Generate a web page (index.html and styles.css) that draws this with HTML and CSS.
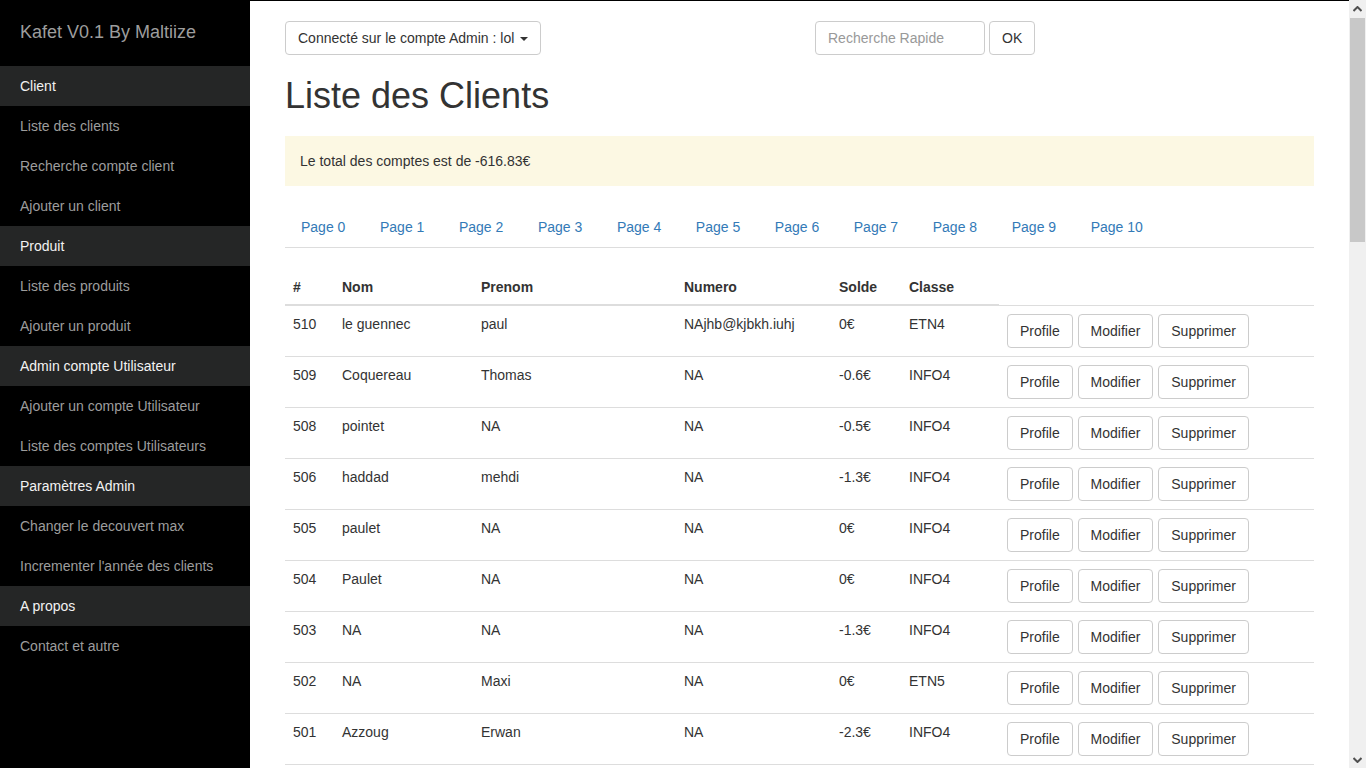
FILE: index.html
```html
<!DOCTYPE html>
<html lang="fr">
<head>
<meta charset="utf-8">
<title>Kafet - Liste des Clients</title>
<link rel="stylesheet" href="styles.css">
</head>
<body>
<div class="layout">
  <aside class="sidebar">
    <div class="brand">Kafet V0.1 By Maltiize</div>
    <div class="side-head">Client</div>
    <a class="side-link" href="#">Liste des clients</a>
    <a class="side-link" href="#">Recherche compte client</a>
    <a class="side-link" href="#">Ajouter un client</a>
    <div class="side-head">Produit</div>
    <a class="side-link" href="#">Liste des produits</a>
    <a class="side-link" href="#">Ajouter un produit</a>
    <div class="side-head">Admin compte Utilisateur</div>
    <a class="side-link" href="#">Ajouter un compte Utilisateur</a>
    <a class="side-link" href="#">Liste des comptes Utilisateurs</a>
    <div class="side-head">Paramètres Admin</div>
    <a class="side-link" href="#">Changer le decouvert max</a>
    <a class="side-link" href="#">Incrementer l'année des clients</a>
    <div class="side-head">A propos</div>
    <a class="side-link" href="#">Contact et autre</a>
  </aside>

  <main class="main">
    <div class="topbar">
      <div>
        <button class="btn" type="button">Connecté sur le compte Admin : lol <span class="caret"></span></button>
      </div>
      <form class="search">
        <input class="search-input" type="text" placeholder="Recherche Rapide">
        <button class="btn" type="button">OK</button>
      </form>
    </div>

    <h1 class="title">Liste des Clients</h1>

    <div class="alert">Le total des comptes est de -616.83€</div>

    <ul class="tabs">
      <li><a href="#">Page 0</a></li>
      <li><a href="#">Page 1</a></li>
      <li><a href="#">Page 2</a></li>
      <li><a href="#">Page 3</a></li>
      <li><a href="#">Page 4</a></li>
      <li><a href="#">Page 5</a></li>
      <li><a href="#">Page 6</a></li>
      <li><a href="#">Page 7</a></li>
      <li><a href="#">Page 8</a></li>
      <li><a href="#">Page 9</a></li>
      <li><a href="#">Page 10</a></li>
    </ul>

    <table class="table">
      <colgroup>
        <col class="c-id"><col class="c-nom"><col class="c-prenom"><col class="c-num"><col class="c-solde"><col class="c-classe"><col>
      </colgroup>
      <thead>
        <tr><th>#</th><th>Nom</th><th>Prenom</th><th>Numero</th><th>Solde</th><th>Classe</th></tr>
      </thead>
      <tbody>
        <tr><td>510</td><td>le guennec</td><td>paul</td><td>NAjhb@kjbkh.iuhj</td><td>0€</td><td>ETN4</td><td class="actions"><button class="btn">Profile</button> <button class="btn">Modifier</button> <button class="btn">Supprimer</button></td></tr>
        <tr><td>509</td><td>Coquereau</td><td>Thomas</td><td>NA</td><td>-0.6€</td><td>INFO4</td><td class="actions"><button class="btn">Profile</button> <button class="btn">Modifier</button> <button class="btn">Supprimer</button></td></tr>
        <tr><td>508</td><td>pointet</td><td>NA</td><td>NA</td><td>-0.5€</td><td>INFO4</td><td class="actions"><button class="btn">Profile</button> <button class="btn">Modifier</button> <button class="btn">Supprimer</button></td></tr>
        <tr><td>506</td><td>haddad</td><td>mehdi</td><td>NA</td><td>-1.3€</td><td>INFO4</td><td class="actions"><button class="btn">Profile</button> <button class="btn">Modifier</button> <button class="btn">Supprimer</button></td></tr>
        <tr><td>505</td><td>paulet</td><td>NA</td><td>NA</td><td>0€</td><td>INFO4</td><td class="actions"><button class="btn">Profile</button> <button class="btn">Modifier</button> <button class="btn">Supprimer</button></td></tr>
        <tr><td>504</td><td>Paulet</td><td>NA</td><td>NA</td><td>0€</td><td>INFO4</td><td class="actions"><button class="btn">Profile</button> <button class="btn">Modifier</button> <button class="btn">Supprimer</button></td></tr>
        <tr><td>503</td><td>NA</td><td>NA</td><td>NA</td><td>-1.3€</td><td>INFO4</td><td class="actions"><button class="btn">Profile</button> <button class="btn">Modifier</button> <button class="btn">Supprimer</button></td></tr>
        <tr><td>502</td><td>NA</td><td>Maxi</td><td>NA</td><td>0€</td><td>ETN5</td><td class="actions"><button class="btn">Profile</button> <button class="btn">Modifier</button> <button class="btn">Supprimer</button></td></tr>
        <tr><td>501</td><td>Azzoug</td><td>Erwan</td><td>NA</td><td>-2.3€</td><td>INFO4</td><td class="actions"><button class="btn">Profile</button> <button class="btn">Modifier</button> <button class="btn">Supprimer</button></td></tr>
      </tbody>
    </table>
  </main>

  <div class="scrollbar" aria-hidden="true">
    <div class="sb-arrow">
      <svg width="9" height="6" viewBox="0 0 9 6"><path d="M0.5 5 L4.5 1 L8.5 5" fill="none" stroke="#505050" stroke-width="2"/></svg>
    </div>
    <div class="sb-track">
      <div class="sb-thumb"></div>
    </div>
    <div class="sb-arrow">
      <svg width="9" height="6" viewBox="0 0 9 6"><path d="M0.5 1 L4.5 5 L8.5 1" fill="none" stroke="#505050" stroke-width="2"/></svg>
    </div>
  </div>
</div>
</body>
</html>
```

FILE: styles.css
```css
* { box-sizing: border-box; }

html, body {
  margin: 0;
  padding: 0;
  height: 100%;
  overflow: hidden;
}

body {
  font-family: "Liberation Sans", Arial, sans-serif;
  font-size: 14px;
  line-height: 20px;
  color: #333;
  background: #fff;
}

.layout {
  display: flex;
  align-items: stretch;
  height: 100vh;
}

/* Sidebar */
.sidebar {
  flex: 0 0 250px;
  width: 250px;
  background: #000;
  display: flex;
  flex-direction: column;
}

.brand {
  padding: 22px 20px 24px;
  line-height: 20px;
  font-size: 18px;
  color: #9d9d9d;
}

.side-head {
  height: 40px;
  line-height: 40px;
  padding-left: 20px;
  background: #252626;
  color: #f2f2f2;
}

.side-link {
  display: block;
  height: 40px;
  line-height: 40px;
  padding-left: 20px;
  color: #9d9d9d;
  text-decoration: none;
}

/* Main */
.main {
  flex: 1;
  min-width: 0;
  overflow: hidden;
  border-top: 1px solid #000;
  padding: 20px 35px 0;
}

.btn {
  display: inline-block;
  font-family: inherit;
  font-size: 14px;
  line-height: 20px;
  padding: 6px 12px;
  color: #333;
  background: #fff;
  border: 1px solid #ccc;
  border-radius: 4px;
  cursor: pointer;
  white-space: nowrap;
  vertical-align: middle;
  margin: 0;
}

.caret {
  display: inline-block;
  width: 0;
  height: 0;
  margin-left: 2px;
  vertical-align: middle;
  border-top: 4px solid #333;
  border-left: 4px solid transparent;
  border-right: 4px solid transparent;
}

.topbar {
  display: grid;
  grid-template-columns: 530px 1fr;
  align-items: center;
}

.search {
  display: flex;
  gap: 4px;
  margin: 0;
}

.search-input {
  width: 170px;
  height: 34px;
  padding: 6px 12px;
  font-family: inherit;
  font-size: 14px;
  color: #555;
  border: 1px solid #ccc;
  border-radius: 4px;
}

.search-input::placeholder {
  color: #999;
}

.title {
  font-size: 36px;
  font-weight: 500;
  line-height: 40px;
  margin: 21px 0 20px;
  color: #333;
}

.alert {
  background: #fcf8e3;
  color: #333;
  padding: 15px;
  margin-bottom: 20px;
}

/* Tabs */
.tabs {
  list-style: none;
  margin: 0;
  padding: 0;
  display: flex;
  border-bottom: 1px solid #ddd;
}

.tabs li {
  margin-right: 2.6px;
  margin-bottom: -1px;
}

.tabs a {
  display: block;
  padding: 10px 15px;
  line-height: 20px;
  color: #337ab7;
  text-decoration: none;
  border: 1px solid transparent;
}

/* Table */
.table {
  width: 100%;
  table-layout: fixed;
  border-collapse: collapse;
  margin-top: 20px;
}

.c-id { width: 49px; }
.c-nom { width: 139px; }
.c-prenom { width: 203px; }
.c-num { width: 155px; }
.c-solde { width: 70px; }
.c-classe { width: 98px; }

.table th {
  text-align: left;
  font-weight: bold;
  padding: 9px 8px 7px;
  line-height: 20px;
  border-bottom: 2px solid #ddd;
}

.table td {
  padding: 8px;
  line-height: 20px;
  vertical-align: top;
  border-top: 1px solid #ddd;
  border-bottom: 1px solid #ddd;
}

.table td.actions {
  white-space: nowrap;
}

.table .btn + .btn {
  margin-left: 1px;
}

/* Scrollbar imitation */
.scrollbar {
  flex: 0 0 17px;
  width: 17px;
  background: #f0f0f0;
  display: flex;
  flex-direction: column;
}

.sb-arrow {
  height: 17px;
  display: flex;
  align-items: center;
  justify-content: center;
}

.sb-track {
  flex: 1;
}

.sb-thumb {
  margin: 1px 1px 0 1px;
  height: 224px;
  background: #c8c8c8;
}
```
